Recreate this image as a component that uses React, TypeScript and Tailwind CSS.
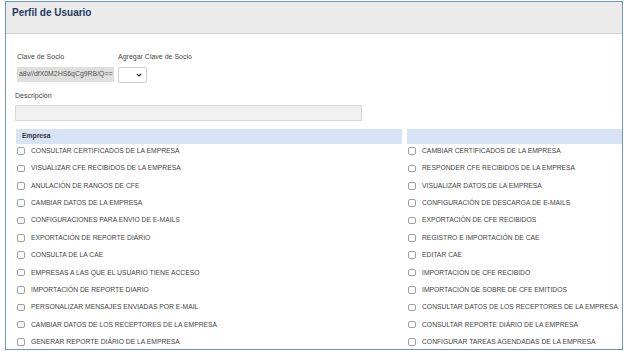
import React from "react";

const left = [
  "CONSULTAR CERTIFICADOS DE LA EMPRESA",
  "VISUALIZAR CFE RECIBIDOS DE LA EMPRESA",
  "ANULACIÓN DE RANGOS DE CFE",
  "CAMBIAR DATOS DE LA EMPRESA",
  "CONFIGURACIONES PARA ENVIO DE E-MAILS",
  "EXPORTACIÓN DE REPORTE DIÁRIO",
  "CONSULTA DE LA CAE",
  "EMPRESAS A LAS QUE EL USUARIO TIENE ACCESO",
  "IMPORTACIÓN DE REPORTE DIARIO",
  "PERSONALIZAR MENSAJES ENVIADAS POR E-MAIL",
  "CAMBIAR DATOS DE LOS RECEPTORES DE LA EMPRESA",
  "GENERAR REPORTE DIÁRIO DE LA EMPRESA",
];

const right = [
  "CAMBIAR CERTIFICADOS DE LA EMPRESA",
  "RESPONDER CFE RECIBIDOS DE LA EMPRESA",
  "VISUALIZAR DATOS DE LA EMPRESA",
  "CONFIGURACIÓN DE DESCARGA DE E-MAILS",
  "EXPORTACIÓN DE CFE RECIBIDOS",
  "REGISTRO E IMPORTACIÓN DE CAE",
  "EDITAR CAE",
  "IMPORTACIÓN DE CFE RECIBIDO",
  "IMPORTACIÓN DE SOBRE DE CFE EMITIDOS",
  "CONSULTAR DATOS DE LOS RECEPTORES DE LA EMPRESA",
  "CONSULTAR REPORTE DIÁRIO DE LA EMPRESA",
  "CONFIGURAR TAREAS AGENDADAS DE LA EMPRESA",
];

function Row({ label }: { label: string }) {
  return (
    <div className="flex h-[17.35px] items-center">
      <span className="ml-[1px] h-[7.5px] w-[7.5px] shrink-0 rounded-[2px] border border-[#a0a0a0] bg-white" />
      <span className="ml-[6.5px] whitespace-nowrap text-[6.75px] text-[#444]">{label}</span>
    </div>
  );
}

export default function App() {
  return (
    <div
      className="h-[351px] w-[625px] overflow-hidden bg-white pt-[1px] pl-[5px]"
      style={{ fontFamily: '"Liberation Sans", Arial, sans-serif' }}
    >
      <div className="h-[349px] w-[618px] overflow-hidden border border-[#6e95c9]">
        <div className="flex h-[32px] items-center border-b border-[#d2d2d2] bg-[#ebebeb] pl-[6px]">
          <span className="mt-[-11px] text-[10px] font-bold text-[#1f3a66]">Perfil de Usuario</span>
        </div>
        <div className="pl-[9px]">
          <div className="mt-[18px] flex">
            <div className="ml-[2px] flex w-[101px] flex-col">
              <span className="text-[7px] leading-[9px] text-[#444]">Clave de Socio</span>
              <div className="mt-[6px] flex h-[15px] w-[97px] items-center overflow-hidden bg-[#dedede] pl-[2px]">
                <span className="whitespace-nowrap text-[6.9px] text-[#555]">a8v//dfX0M2HS6qCg9RB/Q==</span>
              </div>
            </div>
            <div className="flex flex-col">
              <span className="text-[7px] leading-[9px] text-[#444]">Agregar Clave de Socio</span>
              <div className="mt-[6px] flex h-[16px] w-[29px] items-center justify-end rounded-[2px] border border-[#cfcfcf] bg-white pr-[4px]">
                <svg width="6" height="4" viewBox="0 0 6 4">
                  <path d="M0.8 0.8 L3 3 L5.2 0.8" fill="none" stroke="#222" strokeWidth="1.2" />
                </svg>
              </div>
            </div>
          </div>
          <div className="mt-[8px] text-[7px] leading-[9px] text-[#444]">Descripción</div>
          <div className="mt-[5px] h-[16px] w-[347px] rounded-[1px] border border-[#d6d6d6] bg-[#f1f1f1]" />
          <div className="ml-[1px] mt-[7.5px] grid grid-cols-[386px_1fr] gap-x-[5px]">
            <div className="flex h-[15px] items-center bg-[#d8e4f5] pl-[6px]">
              <span className="text-[6.75px] font-bold text-[#333]">Empresa</span>
            </div>
            <div className="h-[15px] bg-[#d8e4f5]" />
            <div className="mt-[-1px] flex flex-col">
              {left.map((l) => (
                <Row key={l} label={l} />
              ))}
            </div>
            <div className="mt-[-1px] flex flex-col">
              {right.map((l) => (
                <Row key={l} label={l} />
              ))}
            </div>
          </div>
        </div>
      </div>
    </div>
  );
}
